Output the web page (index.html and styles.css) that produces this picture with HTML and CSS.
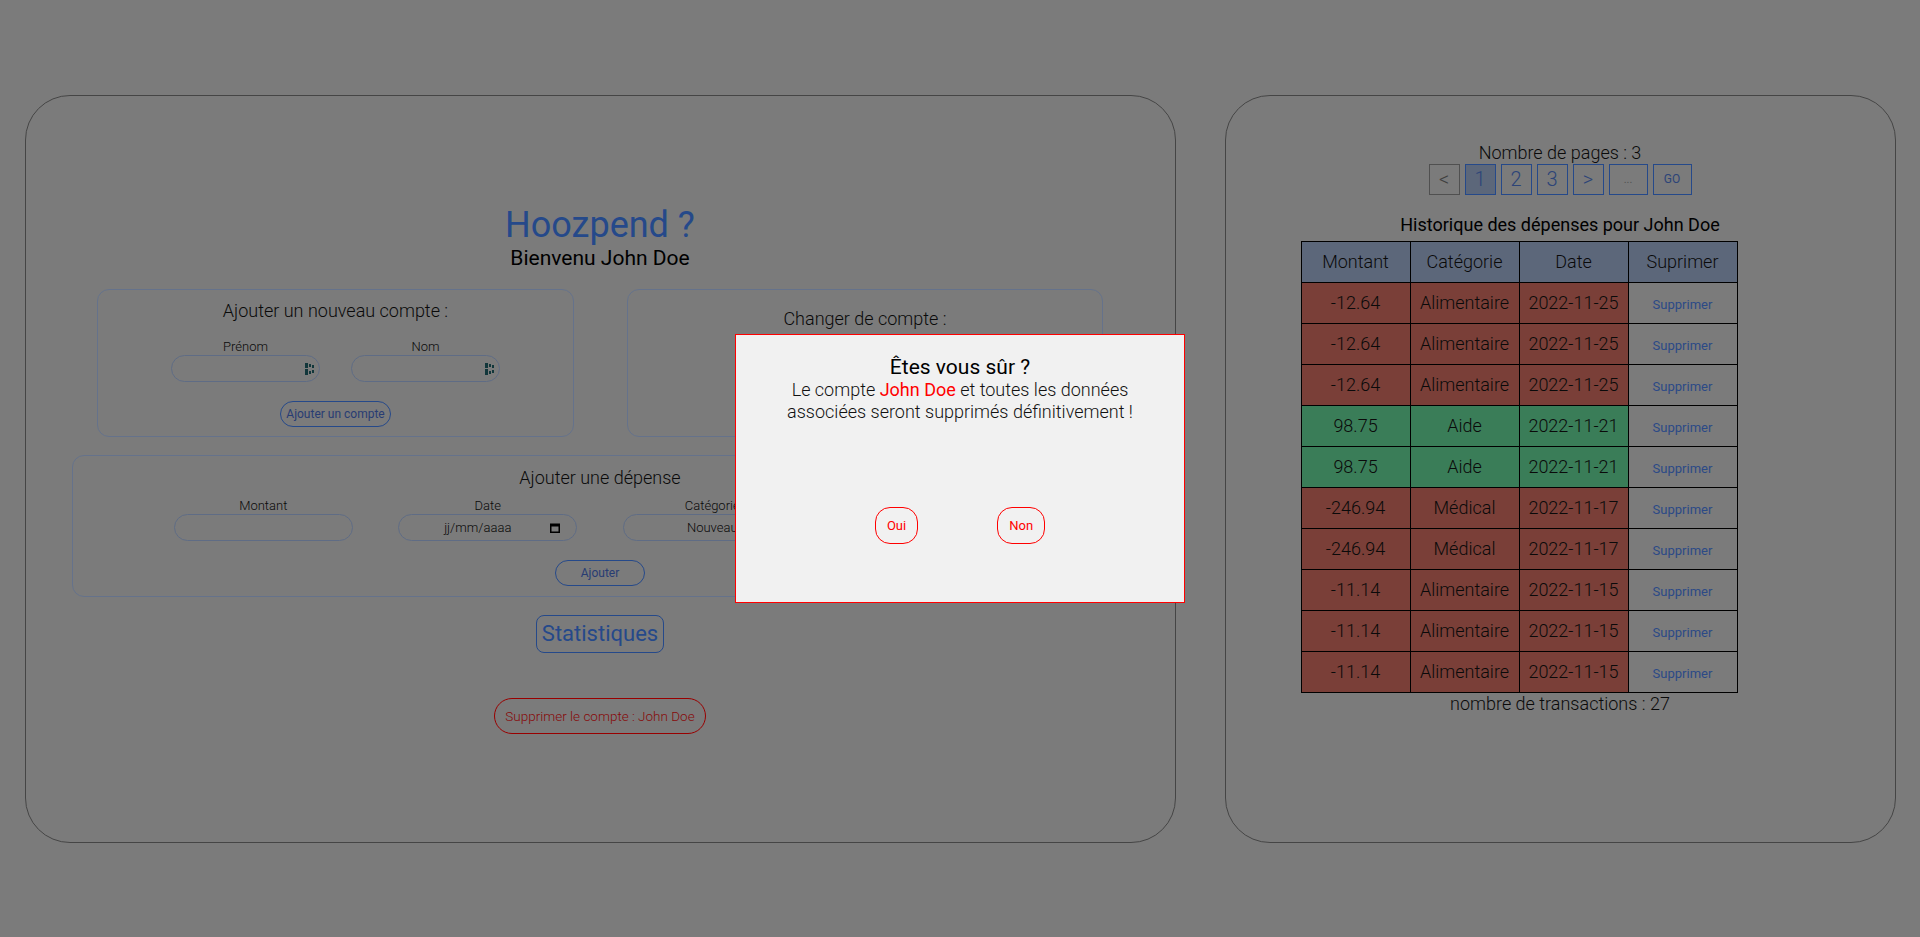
FILE: index.html
```html
<!DOCTYPE html>
<html lang="fr">
<head>
<meta charset="utf-8">
<title>Hoozpend ?</title>
<link rel="stylesheet" href="styles.css">
</head>
<body>
<div class="page">
  <main class="card card-main">
    <h1 class="brand">Hoozpend ?</h1>
    <p class="welcome">Bienvenu John Doe</p>

    <div class="account-row">
      <section class="box box-new">
        <h2 class="box-title">Ajouter un nouveau compte :</h2>
        <div class="fields fields-account">
          <label class="field">
            <span class="field-label">Prénom</span>
            <span class="input-wrap">
              <input class="input" type="text">
              <svg class="autofill-icon" width="10" height="12" viewBox="0 0 10 12"><rect x="0" y="0" width="3" height="5"/><rect x="0" y="6" width="3" height="6"/><rect x="4" y="1" width="2" height="3"/><rect x="4" y="8" width="2" height="3"/><rect x="7" y="2" width="2" height="3"/><rect x="7" y="7" width="2" height="3"/></svg>
            </span>
          </label>
          <label class="field">
            <span class="field-label">Nom</span>
            <span class="input-wrap">
              <input class="input" type="text">
              <svg class="autofill-icon" width="10" height="12" viewBox="0 0 10 12"><rect x="0" y="0" width="3" height="5"/><rect x="0" y="6" width="3" height="6"/><rect x="4" y="1" width="2" height="3"/><rect x="4" y="8" width="2" height="3"/><rect x="7" y="2" width="2" height="3"/><rect x="7" y="7" width="2" height="3"/></svg>
            </span>
          </label>
        </div>
        <button class="btn-outline btn-account">Ajouter un compte</button>
      </section>

      <section class="box box-switch">
        <h2 class="box-title">Changer de compte :</h2>
        <select class="input select-switch">
          <option>John Doe</option>
        </select>
        <button class="btn-outline btn-switch">Changer</button>
      </section>
    </div>

    <section class="box box-expense">
      <h2 class="box-title">Ajouter une dépense</h2>
      <div class="fields fields-expense">
        <label class="field field-wide">
          <span class="field-label">Montant</span>
          <input class="input" type="text">
        </label>
        <label class="field field-wide">
          <span class="field-label">Date</span>
          <span class="input fake-date">
            <span class="date-text">jj/mm/aaaa</span>
            <svg class="cal-icon" width="10" height="10" viewBox="0 0 10 10"><rect x="0.75" y="1.25" width="8.5" height="8" fill="none" stroke="#000" stroke-width="1.5"/><rect x="0.75" y="1" width="8.5" height="2.5" fill="#000"/></svg>
          </span>
        </label>
        <label class="field field-wide">
          <span class="field-label">Catégorie</span>
          <span class="input fake-select">Nouveau</span>
        </label>
        <label class="field field-wide">
          <span class="field-label">Nouvelle catégorie</span>
          <input class="input" type="text">
        </label>
      </div>
      <button class="btn-outline btn-add">Ajouter</button>
    </section>

    <button class="btn-stats">Statistiques</button>
    <button class="btn-delete">Supprimer le compte : John Doe</button>
  </main>

  <aside class="card card-history">
    <p class="pages-count">Nombre de pages : 3</p>
    <nav class="pager">
      <button class="page-btn page-disabled">&lt;</button>
      <button class="page-btn page-active">1</button>
      <button class="page-btn">2</button>
      <button class="page-btn">3</button>
      <button class="page-btn">&gt;</button>
      <input class="page-input" type="text" placeholder="...">
      <button class="page-btn page-go">GO</button>
    </nav>
    <p class="history-title">Historique des dépenses pour John Doe</p>
    <table class="history">
      <thead>
        <tr><th>Montant</th><th>Catégorie</th><th>Date</th><th>Suprimer</th></tr>
      </thead>
      <tbody>
        <tr class="out"><td>-12.64</td><td>Alimentaire</td><td>2022-11-25</td><td class="del-cell"><button class="del-link">Supprimer</button></td></tr>
        <tr class="out"><td>-12.64</td><td>Alimentaire</td><td>2022-11-25</td><td class="del-cell"><button class="del-link">Supprimer</button></td></tr>
        <tr class="out"><td>-12.64</td><td>Alimentaire</td><td>2022-11-25</td><td class="del-cell"><button class="del-link">Supprimer</button></td></tr>
        <tr class="in"><td>98.75</td><td>Aide</td><td>2022-11-21</td><td class="del-cell"><button class="del-link">Supprimer</button></td></tr>
        <tr class="in"><td>98.75</td><td>Aide</td><td>2022-11-21</td><td class="del-cell"><button class="del-link">Supprimer</button></td></tr>
        <tr class="out"><td>-246.94</td><td>Médical</td><td>2022-11-17</td><td class="del-cell"><button class="del-link">Supprimer</button></td></tr>
        <tr class="out"><td>-246.94</td><td>Médical</td><td>2022-11-17</td><td class="del-cell"><button class="del-link">Supprimer</button></td></tr>
        <tr class="out"><td>-11.14</td><td>Alimentaire</td><td>2022-11-15</td><td class="del-cell"><button class="del-link">Supprimer</button></td></tr>
        <tr class="out"><td>-11.14</td><td>Alimentaire</td><td>2022-11-15</td><td class="del-cell"><button class="del-link">Supprimer</button></td></tr>
        <tr class="out"><td>-11.14</td><td>Alimentaire</td><td>2022-11-15</td><td class="del-cell"><button class="del-link">Supprimer</button></td></tr>
      </tbody>
    </table>
    <p class="tx-count">nombre de transactions : 27</p>
  </aside>
</div>

<div class="overlay">
  <div class="modal">
    <h3 class="modal-title">Êtes vous sûr ?</h3>
    <p class="modal-text">Le compte <span class="modal-name">John Doe</span> et toutes les données associées seront supprimés définitivement !</p>
    <div class="modal-actions">
      <button class="modal-btn">Oui</button>
      <button class="modal-btn">Non</button>
    </div>
  </div>
</div>
</body>
</html>
```

FILE: styles.css
```css
* { box-sizing: border-box; }

html, body {
  margin: 0;
  padding: 0;
}

body {
  background: #cdcdcd;
  font-family: Roboto, "Liberation Sans", sans-serif;
  color: #111;
}

button, input, select {
  font-family: Roboto, "Liberation Sans", sans-serif;
}

.page {
  height: 100vh;
  display: flex;
  justify-content: space-around;
  align-items: center;
}

.card {
  height: 748px;
  border: 1px solid #747474;
  border-radius: 45px;
}

.card-main {
  width: 1151px;
  display: flex;
  flex-direction: column;
  justify-content: center;
  align-items: center;
}

.card-history {
  width: 671px;
  display: flex;
  flex-direction: column;
  align-items: center;
  padding-top: 46px;
}

/* ---------- left card ---------- */
.brand {
  margin: 0;
  font-size: 36px;
  line-height: 42px;
  font-weight: 400;
  color: #3f7ae6;
}

.welcome {
  margin: 0;
  font-size: 21px;
  line-height: 25px;
  font-weight: 400;
  color: #000;
}

.account-row {
  display: flex;
  gap: 53px;
  margin-top: 18px;
}

.box {
  border: 1px solid #a9bfe8;
  border-radius: 12px;
  display: flex;
  flex-direction: column;
  align-items: center;
}

.box-title {
  margin: 0;
  font-size: 18px;
  line-height: 21px;
  font-weight: 300;
  color: #111;
}

.box-new {
  width: 477px;
  padding: 10px 0 9px;
}

.box-switch {
  width: 476px;
  padding-top: 18px;
}

.fields {
  display: flex;
  justify-content: center;
}

.fields-account {
  gap: 31px;
  margin-top: 18px;
}

.field {
  display: flex;
  flex-direction: column;
  align-items: center;
}

.field-label {
  font-size: 13px;
  line-height: 16px;
  font-weight: 300;
  color: #111;
}

.input {
  display: block;
  height: 27px;
  border: 1px solid #9fb5de;
  border-radius: 14px;
  background: transparent;
  outline: none;
  font-size: 13px;
  color: #111;
}

.fields-account .input {
  width: 149px;
}

.input-wrap {
  position: relative;
  display: block;
}

.autofill-icon {
  position: absolute;
  right: 5px;
  top: 8px;
  fill: #1f5c63;
}

.btn-outline {
  background: transparent;
  border: 1px solid #3f7ae6;
  border-radius: 13px;
  height: 26px;
  color: #4466c0;
  font-size: 12px;
  font-weight: 400;
  padding: 0 5px;
}

.btn-account {
  margin-top: 19px;
}

.select-switch {
  width: 180px;
  margin-top: 15px;
  text-align: center;
  text-align-last: center;
}

.btn-switch {
  margin-top: 19px;
  padding: 0 20px;
}

.box-expense {
  width: 1056px;
  margin-top: 18px;
  padding: 11px 0 10px;
}

.fields-expense {
  gap: 45.5px;
  margin-top: 10px;
}

.field-wide {
  width: 179px;
}

.field-wide .input {
  width: 179px;
}

.fake-date {
  position: relative;
  display: flex;
  align-items: center;
  justify-content: center;
  padding-right: 20px;
  font-size: 13px;
  font-weight: 300;
}

.date-text {
  color: #111;
}

.cal-icon {
  position: absolute;
  right: 16px;
  top: 8px;
}

.fake-select {
  display: flex;
  align-items: center;
  justify-content: center;
  font-size: 13px;
  font-weight: 300;
}

.btn-add {
  margin-top: 19px;
  padding: 0 25px;
}

.btn-stats {
  margin-top: 18px;
  height: 38px;
  padding: 0 5px;
  border: 1px solid #3f7ae6;
  border-radius: 8px;
  background: transparent;
  color: #3f7ae6;
  font-size: 22px;
  line-height: 26px;
  font-weight: 400;
}

.btn-delete {
  margin-top: 45px;
  height: 36px;
  padding: 0 10px;
  border: 1px solid #ff0000;
  border-radius: 18px;
  background: transparent;
  color: #e01010;
  font-size: 13.5px;
  font-weight: 300;
}

/* ---------- right card ---------- */
.pages-count {
  margin: 0;
  font-size: 18px;
  line-height: 22px;
  font-weight: 300;
}

.pager {
  display: flex;
  gap: 5px;
  height: 31px;
}

.page-btn {
  width: 31px;
  height: 31px;
  padding: 0;
  border: 1px solid #3f7ae6;
  background: transparent;
  color: #4a72c8;
  font-size: 20px;
  font-weight: 300;
}

.page-active {
  background: #9aaccc;
}

.page-disabled {
  border-color: #868686;
  color: #6a6a6a;
}

.page-input {
  width: 39px;
  height: 31px;
  border: 1px solid #3f7ae6;
  background: transparent;
  font-size: 11px;
  text-align: center;
  outline: none;
}

.page-input::placeholder {
  color: #8a8a8a;
}

.page-go {
  width: 39px;
  font-size: 12px;
  font-weight: 400;
}

.history-title {
  margin: 19px 0 0;
  font-size: 18px;
  line-height: 22px;
  font-weight: 400;
  color: #000;
}

.history {
  margin-top: 5px;
  margin-right: 82px;
  width: 437px;
  table-layout: fixed;
  border-collapse: collapse;
}

.history th,
.history td {
  border: 1px solid #000;
  height: 41px;
  padding: 0;
  text-align: center;
  font-size: 18px;
  font-weight: 300;
  color: #111;
}

.history th {
  background: #9aaccc;
}

.history tr.out td {
  background: #cc6a5e;
}

.history tr.in td {
  background: #62d093;
}

.history tr td.del-cell {
  background: transparent;
}

.del-link {
  border: none;
  background: transparent;
  padding: 4px 0 0;
  color: #4a7ce0;
  font-size: 13px;
  font-weight: 400;
}

.tx-count {
  margin: 0;
  font-size: 18px;
  line-height: 22px;
  font-weight: 300;
}

/* ---------- modal ---------- */
.overlay {
  position: fixed;
  inset: 0;
  background: rgba(0, 0, 0, 0.4);
  display: flex;
  align-items: center;
  justify-content: center;
}

.modal {
  width: 450px;
  height: 269px;
  border: 1px solid #ff0000;
  background: #f1f1f1;
  padding-top: 20px;
  display: flex;
  flex-direction: column;
  align-items: center;
  text-align: center;
}

.modal-title {
  margin: 0;
  font-size: 21px;
  line-height: 24px;
  font-weight: 400;
  color: #000;
}

.modal-text {
  margin: 0;
  width: 380px;
  font-size: 18px;
  line-height: 22px;
  font-weight: 300;
  color: #111;
}

.modal-name {
  color: #ff0000;
  font-weight: 400;
}

.modal-actions {
  margin-top: 84px;
  display: flex;
  gap: 79px;
}

.modal-btn {
  height: 37px;
  padding: 0 11px;
  border: 1px solid #ff0000;
  border-radius: 15px;
  background: transparent;
  color: #ff0000;
  font-size: 13px;
  font-weight: 400;
}
```
